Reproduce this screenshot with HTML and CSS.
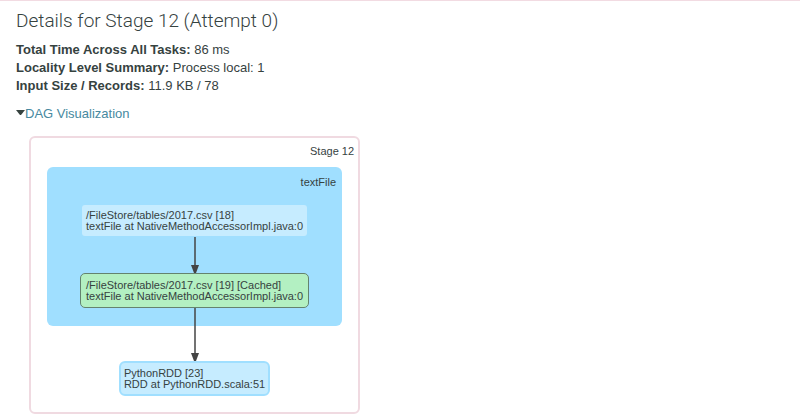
FILE: index.html
```html
<!DOCTYPE html>
<html lang="en">
<head>
<meta charset="utf-8">
<title>Details for Stage 12 (Attempt 0)</title>
<link rel="stylesheet" href="styles.css">
</head>
<body>
<main class="page">
  <h1 class="title">Details for Stage 12 (Attempt 0)</h1>
  <ul class="summary">
    <li><strong>Total Time Across All Tasks:</strong> 86 ms</li>
    <li><strong>Locality Level Summary:</strong> Process local: 1</li>
    <li><strong>Input Size / Records:</strong> 11.9 KB / 78</li>
  </ul>
  <a class="toggle" href="#dag"><span class="caret"></span>DAG Visualization</a>
  <section class="stage" id="dag">
    <div class="label">Stage 12</div>
    <div class="cluster">
      <div class="label">textFile</div>
      <div class="node">/FileStore/tables/2017.csv [18]<br>textFile at NativeMethodAccessorImpl.java:0</div>
      <svg class="arrow" width="10" height="37" viewBox="0 0 10 37" aria-hidden="true"><path class="line" d="M5 1V30"/><path class="head" d="M1 29H9L6 37H4Z"/></svg>
      <div class="node cached">/FileStore/tables/2017.csv [19] [Cached]<br>textFile at NativeMethodAccessorImpl.java:0</div>
    </div>
    <svg class="arrow outgoing" width="10" height="53" viewBox="0 0 10 53" aria-hidden="true"><path class="line" d="M5 0V46"/><path class="head" d="M1 45H9L6 53H4Z"/></svg>
    <div class="node result">PythonRDD [23]<br>RDD at PythonRDD.scala:51</div>
  </section>
</main>
</body>
</html>
```
FILE: styles.css
```css
body {
  margin: 0;
  border-top: 1px solid #f2dbe2;
  background: #fff;
  color: #36423f;
  font: 13px/18px "Liberation Sans", Arial, sans-serif;
}

.page {
  padding: 8px 16px;
}

.title {
  margin: 0 0 8px;
  font: 300 19px/24px Roboto, "Liberation Sans", sans-serif;
}

.summary {
  margin: 0 0 10px;
  padding: 0;
  list-style: none;
}

.toggle {
  display: flex;
  width: fit-content;
  color: #4789a0;
  text-decoration: none;
}

.caret {
  width: 1px;
  height: 0;
  margin-top: 5px;
  border: 4px solid transparent;
  border-top: 5px solid #36423f;
  border-bottom: 0;
}

.stage {
  display: flex;
  flex-direction: column;
  align-items: center;
  width: fit-content;
  box-sizing: border-box;
  margin: 13px 0 0 13px;
  padding: 6px 16px 16px;
  border: 2px solid #f0dae1;
  border-radius: 6px;
  font-size: 11px;
  line-height: 11px;
}

.label {
  align-self: flex-end;
  line-height: 14px;
}

.stage > .label {
  margin-right: -12px;
}

.cluster {
  display: flex;
  flex-direction: column;
  align-items: center;
  margin-top: 9px;
  padding: 8px 33px 18px;
  border-radius: 6px;
  background: #a0dfff;
}

.cluster > .label {
  margin: 0 -27px 16px 0;
}

.node {
  padding: 5px 4px 4px;
  border-radius: 3px;
  background: #c6ecff;
  white-space: nowrap;
}

.cached {
  padding: 6px 5px 5px;
  border: 1px solid #64836f;
  border-radius: 5px;
  background: #b3f0c2;
}

.result {
  padding: 5px 3px 4px;
  border: 2px solid #a0dfff;
  border-radius: 6px;
}

.arrow {
  display: block;
}

.outgoing {
  position: relative;
  margin-top: -18px;
}

.line {
  fill: none;
  stroke: #444;
  stroke-width: 1.5;
}

.head {
  fill: #444;
}
```
